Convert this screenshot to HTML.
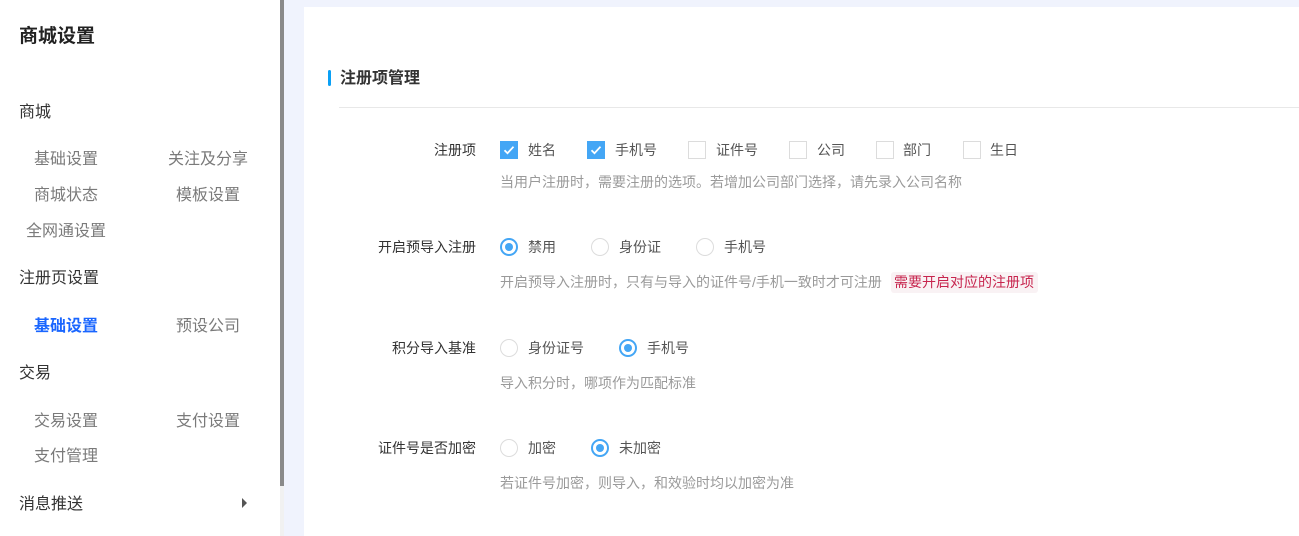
<!DOCTYPE html>
<html><head><meta charset="utf-8"><style>
*{margin:0;padding:0;box-sizing:border-box}
body{width:1299px;height:536px;overflow:hidden;background:#fff;font-family:"Liberation Sans","Noto Sans CJK SC",sans-serif;position:relative}
.a{position:absolute;white-space:nowrap;line-height:20px}
.side{font-size:16px;color:#333}
.sub{font-size:16px;color:#7a7a7a;width:100px;text-align:center}
.lbl{font-size:14px;color:#333;width:200px;text-align:right;left:276px}
.opt{font-size:14px;color:#555}
.hint{font-size:14px;color:#9a9a9a;left:500px}
.cb{position:absolute;width:18px;height:18px;border:1px solid #dcdcdc;background:#fff}
.cb.on{background:#44a6f5;border-color:#44a6f5}
.rd{position:absolute;width:18px;height:18px;border:1px solid #dcdcdc;border-radius:50%;background:#fff}
.rd.on{border:2px solid #44a6f5}
.rd.on::after{content:"";position:absolute;left:3px;top:3px;width:8px;height:8px;border-radius:50%;background:#44a6f5}
</style></head><body>
<div style="position:absolute;left:280px;top:0;width:4px;height:486px;background:#8a8a8a"></div>
<div style="position:absolute;left:280px;top:486px;width:4px;height:50px;background:#f1f1f1"></div>
<div style="position:absolute;left:284px;top:0;width:1015px;height:536px;background:#f0f3fd"></div>
<div style="position:absolute;left:304px;top:7px;width:995px;height:529px;background:#fff"></div>

<div class="a" style="left:19px;top:27px;font-size:19px;font-weight:bold;color:#222">商城设置</div>
<div class="a side" style="left:19px;top:103px">商城</div>
<div class="a sub" style="left:16px;top:150px">基础设置</div>
<div class="a sub" style="left:158px;top:150px">关注及分享</div>
<div class="a sub" style="left:16px;top:186px">商城状态</div>
<div class="a sub" style="left:158px;top:186px">模板设置</div>
<div class="a sub" style="left:16px;top:222px">全网通设置</div>
<div class="a side" style="left:19px;top:269px">注册页设置</div>
<div class="a sub" style="left:16px;top:317px;color:#1a66ff;font-weight:bold">基础设置</div>
<div class="a sub" style="left:158px;top:317px">预设公司</div>
<div class="a side" style="left:19px;top:364px">交易</div>
<div class="a sub" style="left:16px;top:412px">交易设置</div>
<div class="a sub" style="left:158px;top:412px">支付设置</div>
<div class="a sub" style="left:16px;top:447px">支付管理</div>
<div class="a side" style="left:19px;top:495px">消息推送</div>
<div style="position:absolute;left:242px;top:498px;width:0;height:0;border-left:5px solid #555;border-top:5px solid transparent;border-bottom:5px solid transparent"></div>

<div style="position:absolute;left:328px;top:70px;width:3px;height:16px;border-radius:2px;background:#0aa0f5"></div>
<div class="a" style="left:340px;top:69px;font-size:16px;font-weight:bold;color:#333">注册项管理</div>
<div style="position:absolute;left:339px;top:107px;width:960px;height:1px;background:#e8e8e8"></div>

<div class="a lbl" style="top:140px">注册项</div>
<div class="cb on" style="left:500px;top:141px"><svg width="16" height="16" viewBox="0 0 16 16"><path d="M3.5 8.2l3 3 6-6.5" stroke="#fff" stroke-width="1.8" fill="none"/></svg></div>
<div class="a opt" style="left:528px;top:140px">姓名</div>
<div class="cb on" style="left:587px;top:141px"><svg width="16" height="16" viewBox="0 0 16 16"><path d="M3.5 8.2l3 3 6-6.5" stroke="#fff" stroke-width="1.8" fill="none"/></svg></div>
<div class="a opt" style="left:615px;top:140px">手机号</div>
<div class="cb" style="left:688px;top:141px"></div>
<div class="a opt" style="left:716px;top:140px">证件号</div>
<div class="cb" style="left:789px;top:141px"></div>
<div class="a opt" style="left:817px;top:140px">公司</div>
<div class="cb" style="left:876px;top:141px"></div>
<div class="a opt" style="left:903px;top:140px">部门</div>
<div class="cb" style="left:963px;top:141px"></div>
<div class="a opt" style="left:990px;top:140px">生日</div>
<div class="a hint" style="top:172px">当用户注册时，需要注册的选项。若增加公司部门选择，请先录入公司名称</div>

<div class="a lbl" style="top:237px">开启预导入注册</div>
<div class="rd on" style="left:500px;top:238px"></div>
<div class="a opt" style="left:528px;top:237px">禁用</div>
<div class="rd" style="left:591px;top:238px"></div>
<div class="a opt" style="left:619px;top:237px">身份证</div>
<div class="rd" style="left:696px;top:238px"></div>
<div class="a opt" style="left:724px;top:237px">手机号</div>
<div class="a hint" style="top:272px">开启预导入注册时，只有与导入的证件号/手机一致时才可注册</div>
<div class="a" style="left:891px;top:272px;height:21px;padding:0 4px 0 3px;background:#f9f2f4;color:#c7254e;font-size:14px;border-radius:3px">需要开启对应的注册项</div>

<div class="a lbl" style="top:338px">积分导入基准</div>
<div class="rd" style="left:500px;top:339px"></div>
<div class="a opt" style="left:528px;top:338px">身份证号</div>
<div class="rd on" style="left:619px;top:339px"></div>
<div class="a opt" style="left:647px;top:338px">手机号</div>
<div class="a hint" style="top:373px">导入积分时，哪项作为匹配标准</div>

<div class="a lbl" style="top:438px">证件号是否加密</div>
<div class="rd" style="left:500px;top:439px"></div>
<div class="a opt" style="left:528px;top:438px">加密</div>
<div class="rd on" style="left:591px;top:439px"></div>
<div class="a opt" style="left:619px;top:438px">未加密</div>
<div class="a hint" style="top:473px">若证件号加密，则导入，和效验时均以加密为准</div>
</body></html>
